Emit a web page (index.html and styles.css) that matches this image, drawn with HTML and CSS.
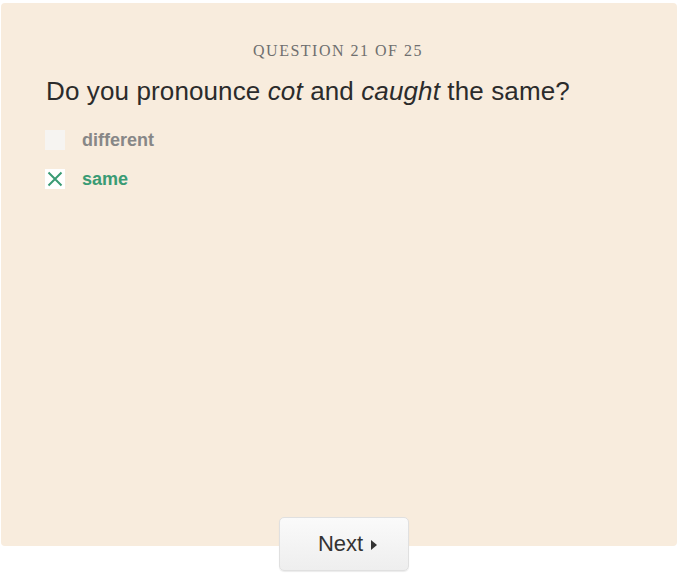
FILE: index.html
```html
<!DOCTYPE html>
<html>
<head>
<meta charset="utf-8">
<link rel="stylesheet" href="styles.css">
</head>
<body>
<div class="page">
  <div class="panel">
    <div class="counter">QUESTION 21 OF 25</div>
    <h1 class="question">Do you pronounce <em>cot</em> and <em>caught</em> the same?</h1>
    <div class="options">
      <div class="option">
        <span class="box"></span>
        <span class="label">different</span>
      </div>
      <div class="option selected">
        <span class="box">
          <svg width="20" height="20" viewBox="0 0 20 20"><path d="M3.5 3.5 L16.5 16.5 M16.5 3.5 L3.5 16.5" stroke="#3a9b74" stroke-width="2" fill="none"/></svg>
        </span>
        <span class="label">same</span>
      </div>
    </div>
  </div>
  <div class="actions">
    <button class="next">Next <span class="tri"></span></button>
  </div>
</div>
</body>
</html>
```

FILE: styles.css
```css
html, body {
  margin: 0;
  padding: 0;
  background: #ffffff;
}
.page {
  width: 679px;
  height: 581px;
  overflow: hidden;
  padding-top: 3px;
  box-sizing: border-box;
}
.panel {
  margin-left: 1px;
  width: 676px;
  height: 543px;
  box-sizing: border-box;
  background: #f8ecdd;
  border-radius: 4px;
  padding: 39px 44px 0 45px;
}
.counter {
  font-family: "Liberation Serif", serif;
  font-size: 16px;
  letter-spacing: 1.5px;
  color: #6f6f6f;
  text-align: center;
  line-height: 18px;
  margin-left: -3px;
}
.question {
  margin: 16px 0 0 0;
  font-family: "Liberation Sans", Arial, sans-serif;
  font-weight: normal;
  font-size: 26px;
  letter-spacing: 0.12px;
  line-height: 30px;
  color: #2b2b2b;
}
.question em {
  font-style: italic;
}
.options {
  margin-top: 24px;
  display: flex;
  flex-direction: column;
  gap: 19px;
}
.option {
  display: flex;
  align-items: center;
  gap: 17px;
  height: 20px;
  margin-left: -1px;
}
.box {
  width: 20px;
  height: 20px;
  background: #f6f4f1;
  display: block;
}
.selected .box {
  background: #ffffff;
}
.box svg {
  display: block;
}
.label {
  font-family: "Liberation Sans", Arial, sans-serif;
  font-weight: bold;
  font-size: 18px;
  color: #878787;
}
.selected .label {
  color: #3a9b74;
}
.actions {
  display: flex;
  justify-content: center;
  margin-top: -29px;
  padding-left: 9px;
}
.next {
  width: 130px;
  height: 54px;
  border: 1px solid #e0e0e0;
  border-radius: 5px;
  background: linear-gradient(#fafafa, #eeeeee);
  font-family: "Liberation Sans", Arial, sans-serif;
  font-size: 22px;
  color: #333333;
  display: flex;
  align-items: center;
  justify-content: center;
  gap: 8px;
  padding: 0 0 0 7px;
  box-shadow: 0 1px 1px rgba(0,0,0,0.08);
}
.tri {
  width: 0;
  height: 0;
  border-top: 5px solid transparent;
  border-bottom: 5px solid transparent;
  border-left: 6px solid #333333;
  margin-top: 2px;
}
```
